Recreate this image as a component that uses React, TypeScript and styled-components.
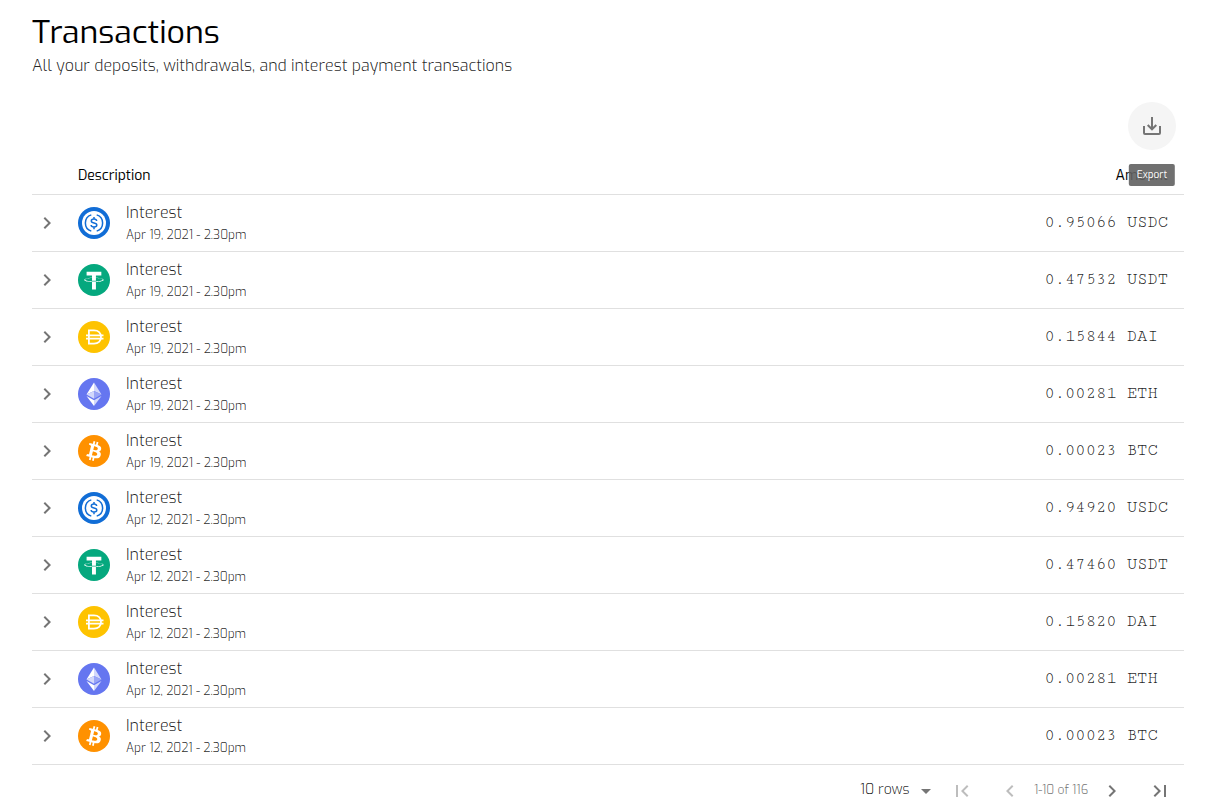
import React, { useState } from "react";
import styled, { createGlobalStyle } from "styled-components";

const GlobalStyle = createGlobalStyle`
  *, *::before, *::after { box-sizing: border-box; }
  body {
    margin: 0;
    background: #fff;
    color: rgba(0, 0, 0, 0.87);
    font-family: Exo, "Exo 2", Roboto, "Open Sans", sans-serif;
    font-size: 16px;
    font-weight: 300;
  }
  button, select { font: inherit; color: inherit; }
`;

const Page = styled.main`
  padding: 12px 25px 0 32px;
`;

const Title = styled.h1`
  margin: 0;
  font-size: 32px;
  line-height: 40px;
  font-weight: 400;
  color: #000;
`;

const Subtitle = styled.p`
  margin: 0;
  padding-top: 2px;
  font-size: 16px;
  line-height: 24px;
`;

const Toolbar = styled.div`
  display: flex;
  justify-content: flex-end;
  padding: 24px 8px 6px 0;
`;

const ExportWrap = styled.div`
  position: relative;
`;

const ExportButton = styled.button`
  display: grid;
  place-items: center;
  width: 48px;
  height: 48px;
  padding: 0;
  border: 0;
  border-radius: 50%;
  background: #f5f5f5;
  color: #757575;
  cursor: pointer;
`;

const Tooltip = styled.span`
  position: absolute;
  top: 100%;
  left: 50%;
  transform: translateX(-50%);
  margin-top: 14px;
  padding: 4px 8px;
  border-radius: 2px;
  background: rgba(97, 97, 97, 0.9);
  color: #fff;
  font-size: 10px;
  line-height: 14px;
  font-weight: 400;
`;

const Table = styled.table`
  width: 100%;
  border-collapse: separate;
  border-spacing: 0;
`;

const HeadCell = styled.th<{ $align?: "left" | "right" }>`
  height: 39px;
  padding: 2px 16px 0 0;
  border-bottom: 1px solid #e0e0e0;
  text-align: ${(p) => p.$align ?? "left"};
  font-size: 14px;
  line-height: 20px;
  font-weight: 400;
  color: #000;
`;

const Cell = styled.td`
  height: 57px;
  padding: 0;
  border-bottom: 1px solid #e0e0e0;
`;

const ToggleCell = styled(Cell)`
  width: 46px;
`;

const AmountCell = styled(Cell)`
  padding: 0 16px 2px 0;
  text-align: right;
  white-space: pre;
  font-family: "Cutive Mono", "Courier Prime", Courier, "Liberation Mono", monospace;
  font-size: 17px;
`;

const IconButton = styled.button<{ $width: number }>`
  display: grid;
  place-items: center;
  width: ${(p) => p.$width}px;
  height: 24px;
  padding: 0;
  border: 0;
  background: none;
  color: #757575;
  cursor: pointer;
  &:disabled {
    color: #bdbdbd;
    cursor: default;
  }
`;

const Entry = styled.div`
  display: flex;
  align-items: center;
  gap: 16px;
`;

const EntryName = styled.div`
  font-size: 16px;
  line-height: 24px;
`;

const EntryDate = styled.div`
  font-size: 12px;
  line-height: 20px;
`;

const Pagination = styled.nav`
  display: flex;
  justify-content: flex-end;
  align-items: center;
  padding-top: 14px;
`;

const RowsField = styled.div`
  position: relative;
  width: 78px;
  height: 24px;
  color: #757575;
  svg {
    position: absolute;
    right: 0;
    top: 0;
    pointer-events: none;
  }
`;

const RowsSelect = styled.select`
  display: block;
  appearance: none;
  width: 100%;
  height: 20px;
  padding: 0;
  border: 0;
  background: none;
  font-size: 14px;
  color: rgba(0, 0, 0, 0.87);
`;

const Range = styled.span`
  width: 54px;
  padding-bottom: 2px;
  text-align: center;
  white-space: nowrap;
  font-size: 12px;
  line-height: 20px;
  color: #757575;
`;

const Glyph = ({ d }: { d: string }) => (
  <svg width="24" height="24" viewBox="0 0 24 24" fill="currentColor" aria-hidden="true">
    <path d={d} />
  </svg>
);

const CHEVRON_RIGHT = "M10 6L8.59 7.41 13.17 12l-4.58 4.59L10 18l6-6z";
const CHEVRON_LEFT = "M15.41 7.41L14 6l-6 6 6 6 1.41-1.41L10.83 12z";
const FIRST_PAGE = "M18.41 16.59L13.82 12l4.59-4.59L17 6l-6 6 6 6zM6 6h2v12H6z";
const LAST_PAGE = "M5.59 7.41L10.18 12l-4.59 4.59L7 18l6-6-6-6zM16 6h2v12h-2z";
const DROP_DOWN = "M7 10l5 5 5-5z";

type Coin = "USDC" | "USDT" | "DAI" | "ETH" | "BTC";

const COIN_COLOR: Record<Coin, string> = {
  USDC: "#116dd6",
  USDT: "#05a87e",
  DAI: "#fec300",
  ETH: "#6576f0",
  BTC: "#ff9100",
};

const CoinArt = ({ coin }: { coin: Coin }) => {
  switch (coin) {
    case "USDC":
      return (
        <>
          <circle cx="16" cy="16" r="12" fill="#fff" />
          <g fill="none" stroke="#116dd6" strokeWidth="1.5">
            <path d="M13.3 7.9a8.500 8.500 0 0 0 0 16.2M18.7 7.9a8.500 8.500 0 0 1 0 16.2" />
            <path d="M18.700 14c-.2-1.300-1.200-1.900-2.700-1.900-1.600 0-2.700.7-2.700 1.900 0 1.300 1.200 1.700 2.700 2 1.600.3 2.800.8 2.800 2.100 0 1.300-1.100 2-2.800 2s-2.800-.7-2.900-2.100M16 10v2M16 20v2.200" />
          </g>
        </>
      );
    case "USDT":
      return (
        <path
          fill="#fff"
          d="M17.922 17.383v-.002c-.11.008-.677.042-1.942.042-1.01 0-1.721-.03-1.971-.042v.003c-3.888-.171-6.79-.848-6.79-1.658 0-.809 2.902-1.486 6.79-1.66v2.644c.254.018.982.061 1.988.061 1.207 0 1.812-.05 1.925-.06v-2.643c3.88.173 6.775.85 6.775 1.658 0 .81-2.895 1.485-6.775 1.657m0-3.59v-2.366h5.414V7.819H8.595v3.608h5.414v2.365c-4.4.202-7.709 1.074-7.709 2.118 0 1.044 3.309 1.915 7.709 2.118v7.582h3.913v-7.584c4.393-.202 7.694-1.073 7.694-2.116 0-1.043-3.301-1.914-7.694-2.117"
        />
      );
    case "DAI":
      return (
        <g fill="none" stroke="#fff" strokeWidth="1.8">
          <path d="M10.900 9.400h5.100c4.300 0 7 2.700 7 6.600s-2.700 6.600-7 6.600h-5.100z" />
          <path d="M8 14.400h17.500M8 17.600h17.500" strokeWidth="1.600" />
        </g>
      );
    case "ETH":
      return (
        <>
          <path d="M16 4.500v8.500l7.500 3.400z" fill="#d3d8fb" />
          <path d="M16 4.500L8.500 16.400 16 13z" fill="#fff" />
          <path d="M16 13v7.800l7.500-4.400z" fill="#9aa5f6" />
          <path d="M16 13l-7.500 3.400 7.500 4.400z" fill="#d3d8fb" />
          <path d="M16 22.300v5.600l7.500-10z" fill="#d3d8fb" />
          <path d="M16 27.900v-5.600l-7.500-4.400z" fill="#fff" />
        </>
      );
    case "BTC":
      return (
        <path
          fill="#fff"
          d="M23.189 14.02c.314-2.096-1.283-3.223-3.465-3.975l.708-2.84-1.728-.43-.69 2.765c-.454-.114-.92-.22-1.385-.326l.695-2.783L15.596 6l-.708 2.839c-.376-.086-.746-.17-1.104-.26l.002-.009-2.384-.595-.46 1.846s1.283.294 1.256.312c.7.175.826.638.805 1.006l-.806 3.235c.048.012.11.03.18.057l-.183-.045-1.13 4.532c-.086.212-.303.531-.793.41.018.025-1.256-.313-1.256-.313l-.858 1.978 2.25.561c.418.105.828.215 1.231.318l-.715 2.872 1.727.43.708-2.84c.472.127.93.245 1.378.357l-.706 2.828 1.728.43.715-2.866c2.948.558 5.164.333 6.097-2.333.752-2.146-.037-3.385-1.588-4.192 1.13-.26 1.98-1.003 2.207-2.538zm-3.95 5.538c-.533 2.147-4.148.986-5.32.695l.95-3.805c1.172.293 4.929.872 4.37 3.11zm.535-5.569c-.487 1.953-3.495.96-4.47.717l.86-3.45c.975.243 4.118.696 3.61 2.733z"
        />
      );
  }
};

const CoinIcon = ({ coin }: { coin: Coin }) => (
  <svg width="32" height="32" viewBox="0 0 32 32" aria-hidden="true">
    <circle cx="16" cy="16" r="16" fill={COIN_COLOR[coin]} />
    <CoinArt coin={coin} />
  </svg>
);

const TRANSACTIONS: { date: string; amount: string; coin: Coin }[] = [
  { date: "Apr 19, 2021 - 2.30pm", amount: "0.95066", coin: "USDC" },
  { date: "Apr 19, 2021 - 2.30pm", amount: "0.47532", coin: "USDT" },
  { date: "Apr 19, 2021 - 2.30pm", amount: "0.15844", coin: "DAI" },
  { date: "Apr 19, 2021 - 2.30pm", amount: "0.00281", coin: "ETH" },
  { date: "Apr 19, 2021 - 2.30pm", amount: "0.00023", coin: "BTC" },
  { date: "Apr 12, 2021 - 2.30pm", amount: "0.94920", coin: "USDC" },
  { date: "Apr 12, 2021 - 2.30pm", amount: "0.47460", coin: "USDT" },
  { date: "Apr 12, 2021 - 2.30pm", amount: "0.15820", coin: "DAI" },
  { date: "Apr 12, 2021 - 2.30pm", amount: "0.00281", coin: "ETH" },
  { date: "Apr 12, 2021 - 2.30pm", amount: "0.00023", coin: "BTC" },
];

export default function App() {
  const [rows, setRows] = useState("10");
  return (
    <>
      <GlobalStyle />
      <Page>
        <Title>Transactions</Title>
        <Subtitle>All your deposits, withdrawals, and interest payment transactions</Subtitle>
        <Toolbar>
          <ExportWrap>
            <ExportButton type="button" aria-label="Export" aria-describedby="export-tip">
              <svg width="24" height="24" viewBox="0 0 24 24" fill="none" stroke="currentColor" strokeWidth="2" aria-hidden="true">
                <path d="M4 12v7a1 1 0 0 0 1 1h14a1 1 0 0 0 1-1v-7M12 3v12M7.700 11l4.300 4.300 4.300-4.300" />
              </svg>
            </ExportButton>
            <Tooltip role="tooltip" id="export-tip">Export</Tooltip>
          </ExportWrap>
        </Toolbar>
        <Table>
          <thead>
            <tr>
              <HeadCell aria-label="Details" />
              <HeadCell scope="col">Description</HeadCell>
              <HeadCell scope="col" $align="right">Amount</HeadCell>
            </tr>
          </thead>
          <tbody>
            {TRANSACTIONS.map((t, i) => (
              <tr key={i}>
                <ToggleCell>
                  <IconButton type="button" $width={30} aria-label="Show details">
                    <Glyph d={CHEVRON_RIGHT} />
                  </IconButton>
                </ToggleCell>
                <Cell>
                  <Entry>
                    <CoinIcon coin={t.coin} />
                    <div>
                      <EntryName>Interest</EntryName>
                      <EntryDate>{t.date}</EntryDate>
                    </div>
                  </Entry>
                </Cell>
                <AmountCell>{`${t.amount} ${t.coin.padEnd(4)}`}</AmountCell>
              </tr>
            ))}
          </tbody>
        </Table>
        <Pagination aria-label="Pagination">
          <RowsField>
            <RowsSelect aria-label="Rows per page" value={rows} onChange={(e) => setRows(e.target.value)}>
              <option value="10">10 rows</option>
              <option value="25">25 rows</option>
              <option value="50">50 rows</option>
            </RowsSelect>
            <Glyph d={DROP_DOWN} />
          </RowsField>
          <IconButton type="button" $width={48} disabled aria-label="First page">
            <Glyph d={FIRST_PAGE} />
          </IconButton>
          <IconButton type="button" $width={48} disabled aria-label="Previous page">
            <Glyph d={CHEVRON_LEFT} />
          </IconButton>
          <Range>1-10 of 116</Range>
          <IconButton type="button" $width={48} aria-label="Next page">
            <Glyph d={CHEVRON_RIGHT} />
          </IconButton>
          <IconButton type="button" $width={48} aria-label="Last page">
            <Glyph d={LAST_PAGE} />
          </IconButton>
        </Pagination>
      </Page>
    </>
  );
}
